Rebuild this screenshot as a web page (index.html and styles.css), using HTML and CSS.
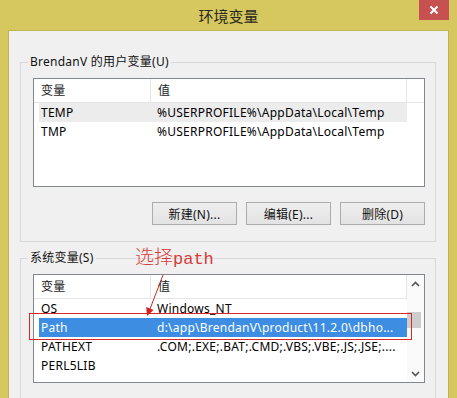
FILE: index.html
```html
<!DOCTYPE html>
<html lang="zh-CN">
<head>
<meta charset="utf-8">
<title>环境变量</title>
<link rel="stylesheet" href="styles.css">
</head>
<body>
<div class="window">
  <div class="titlebar">
    <span></span>
    <div class="title">环境变量</div>
    <div class="close">
      <svg width="10" height="10" viewBox="0 0 10 10"><path d="M1.5 1.5 L8.5 8.5 M8.5 1.5 L1.5 8.5" stroke="#fff" stroke-width="2" fill="none"/></svg>
    </div>
  </div>
  <div class="client">
    <fieldset class="group">
      <legend>BrendanV 的用户变量(U)</legend>
      <div class="list">
        <div class="list-main">
          <div class="header"><div class="hcell c1">变量</div><div class="hcell c2">值</div></div>
          <div class="row hover"><span class="c1">TEMP</span><span class="c2">%USERPROFILE%\AppData\Local\Temp</span></div>
          <div class="row"><span class="c1">TMP</span><span class="c2">%USERPROFILE%\AppData\Local\Temp</span></div>
        </div>
        <div class="side"><div class="side-head"></div></div>
      </div>
      <div class="buttons">
        <div class="btn">新建(N)...</div>
        <div class="btn">编辑(E)...</div>
        <div class="btn">删除(D)</div>
      </div>
    </fieldset>
    <fieldset class="group">
      <legend>系统变量(S)</legend>
      <div class="list">
        <div class="list-main">
          <div class="header"><div class="hcell c1">变量</div><div class="hcell c2">值</div></div>
          <div class="row"><span class="c1">OS</span><span class="c2">Windows_NT</span></div>
          <div class="row selected"><span class="c1">Path</span><span class="c2">d:\app\BrendanV\product\11.2.0\dbho...</span></div>
          <div class="row"><span class="c1">PATHEXT</span><span class="c2">.COM;.EXE;.BAT;.CMD;.VBS;.VBE;.JS;.JSE;....</span></div>
          <div class="row"><span class="c1">PERL5LIB</span><span class="c2"></span></div>
        </div>
        <div class="side scrollbar">
          <div class="arrow"><svg width="9" height="6" viewBox="0 0 9 6"><path d="M1 5 L4.5 1.5 L8 5" stroke="#555" stroke-width="1.6" fill="none"/></svg></div>
          <div class="thumb"></div>
          <div class="arrow down"><svg width="9" height="6" viewBox="0 0 9 6"><path d="M1 1 L4.5 4.5 L8 1" stroke="#555" stroke-width="1.6" fill="none"/></svg></div>
        </div>
      </div>
      <div class="buttons">
        <div class="btn">新建(W)...</div>
        <div class="btn">编辑(I)...</div>
        <div class="btn">删除(L)</div>
      </div>
    </fieldset>
  </div>
  <div class="annot">选择<span class="latin">path</span></div>
  <svg class="overlay" width="457" height="398" viewBox="0 0 457 398">
    <rect x="29.5" y="313.5" width="382" height="26" fill="none" stroke="#d42a26" stroke-width="1" shape-rendering="crispEdges"/>
    <line x1="163" y1="275" x2="150" y2="309" stroke="#b8302c" stroke-width="1"/>
    <polygon points="147,316 153.6,310 146.2,307.1" fill="#d3201c"/>
  </svg>
</div>
</body>
</html>
```
FILE: styles.css
```css
* { box-sizing: border-box; }
html, body { margin: 0; padding: 0; }
body {
  width: 457px;
  height: 398px;
  overflow: hidden;
  background: #d6c85f;
  font-family: "Noto Sans", "Noto Sans CJK SC", sans-serif;
  font-size: 12px;
  letter-spacing: 0.25px;
  color: #000;
}
.window {
  position: relative;
  width: 457px;
  height: 398px;
  overflow: hidden;
  background: #d6c85f;
  padding: 0 8px;
  display: flex;
  flex-direction: column;
}
.titlebar {
  height: 30px;
  flex: none;
  display: grid;
  grid-template-columns: 1fr auto 1fr;
  align-items: start;
}
.title {
  font-family: "Noto Sans CJK SC", sans-serif;
  font-size: 15px;
  line-height: 31px;
  letter-spacing: 0;
  color: #2a2a1c;
}
.close {
  justify-self: end;
  width: 30px;
  height: 20px;
  background: #c75150;
  display: flex;
  align-items: center;
  justify-content: center;
}
.client {
  flex: 1;
  background: #f0f0f0;
  border: 1px solid #bfb352;
  padding: 23px 12px 0 11px;
}
.group {
  margin: 0;
  min-width: 0;
  border: 1px solid #d9d9d9;
  padding: 8px 10px 16px 12px;
}
.group + .group { margin-top: 8px; }
legend {
  padding: 0 2px;
  margin-left: -5px;
  line-height: 16px;
  color: #111;
}
.list {
  display: flex;
  height: 109px;
  border: 1px solid #828790;
  background: #fff;
}
.list-main { flex: 1; min-width: 0; }
.header {
  display: flex;
  height: 24px;
  border-bottom: 1px solid #e5e5e5;
}
.hcell {
  line-height: 23px;
  padding-left: 7px;
  border-right: 1px solid #e5e5e5;
  color: #1a1a1a;
}
.hcell.c1 { width: 117px; }
.hcell.c2 { flex: 1; }
.row {
  display: flex;
  height: 19px;
  line-height: 19px;
  margin-left: 5px;
  white-space: nowrap;
}
.row .c1 { width: 111px; padding-left: 2px; }
.row .c2 { flex: 1; padding-left: 7px; overflow: hidden; }
.row.hover { background: #ececec; }
.row.selected { background: #3d8ee2; color: #fff; }
.side { width: 17px; flex: none; }
.side-head { height: 24px; border-bottom: 1px solid #e5e5e5; }
.scrollbar {
  background: #fafafa;
  display: flex;
  flex-direction: column;
}
.arrow {
  height: 17px;
  display: flex;
  align-items: center;
  justify-content: center;
}
.arrow.down { margin-top: auto; }
.thumb {
  width: 14px;
  height: 16px;
  margin-top: 20px;
  background: #cdcdcd;
}
.buttons {
  display: flex;
  justify-content: flex-end;
  gap: 9px;
  margin-top: 15px;
}
.btn {
  width: 85px;
  height: 23px;
  border: 1px solid #acacac;
  background: linear-gradient(#eeeeee, #e3e3e3);
  display: flex;
  align-items: center;
  justify-content: center;
  color: #111;
}
.annot {
  position: absolute;
  left: 135px;
  top: 244px;
  font-family: "Noto Sans CJK SC", sans-serif;
  font-size: 19px;
  font-weight: 300;
  line-height: 24px;
  letter-spacing: 0;
  color: #d83b36;
}
.annot .latin {
  font-family: "Liberation Mono", monospace;
  font-size: 17px;
}
.overlay {
  position: absolute;
  left: 0;
  top: 0;
  pointer-events: none;
}
```
